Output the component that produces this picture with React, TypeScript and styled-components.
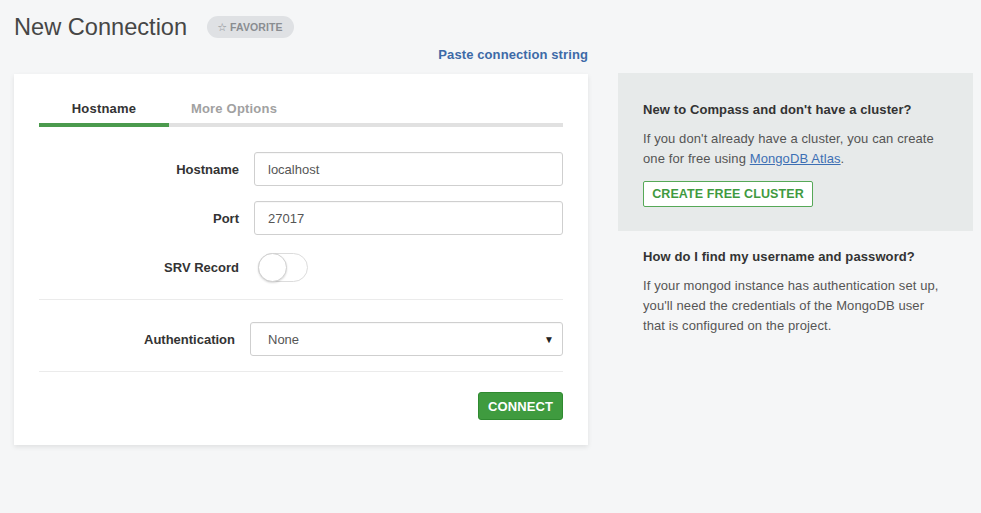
import React from "react";
import styled, { createGlobalStyle } from "styled-components";

const Global = createGlobalStyle`
  html, body { margin: 0; padding: 0; }
  body {
    background: #f5f6f7;
    font-family: "Liberation Sans", Arial, sans-serif;
    color: #333;
    width: 981px;
    height: 513px;
    overflow: hidden;
  }
  * { box-sizing: border-box; }
`;

const Page = styled.div`
  padding: 12px 8px 0 14px;
`;

const Header = styled.div`
  display: flex;
  align-items: center;
  height: 30px;
  gap: 20px;
`;

const Title = styled.h1`
  margin: 0;
  font-size: 23.6px;
  font-weight: 400;
  color: #464646;
  line-height: 30px;
`;

const FavPill = styled.span`
  display: inline-flex;
  align-items: center;
  gap: 3px;
  height: 22px;
  padding: 0 11px 0 10px;
  border-radius: 11px;
  background: #dfe1e4;
  color: #8a8d91;
  font-size: 10.5px;
  font-weight: 700;
  letter-spacing: 0.1px;
`;

const Star = styled.span`
  font-family: "DejaVu Sans", sans-serif;
  font-size: 11px;
  font-weight: 400;
`;

const Main = styled.div`
  display: grid;
  grid-template-columns: 574px 1fr;
  column-gap: 30px;
`;

const LinkRow = styled.div`
  grid-column: 1;
  text-align: right;
  line-height: 20px;
  margin-top: 2px;
  margin-bottom: 9px;
`;

const PasteLink = styled.a`
  font-size: 13px;
  font-weight: 700;
  color: #3d6aa7;
  text-decoration: none;
  letter-spacing: 0.1px;
`;

const Card = styled.div`
  grid-column: 1;
  background: #fff;
  box-shadow: 0 2px 5px rgba(0, 0, 0, 0.09);
  padding: 25px 25px 25px;
`;

const TabList = styled.div`
  display: flex;
  border-bottom: 4px solid #e1e1e1;
`;

const Tab = styled.div<{ $active?: boolean }>`
  width: 130px;
  text-align: center;
  font-size: 13px;
  font-weight: 700;
  line-height: 20px;
  letter-spacing: 0.2px;
  padding-bottom: 4px;
  margin-bottom: -4px;
  border-bottom: 4px solid ${(p) => (p.$active ? "#4b9a4d" : "transparent")};
  color: ${(p) => (p.$active ? "#333" : "#a1a1a1")};
`;

const FormGroup = styled.div<{ $label: number; $top: number }>`
  display: grid;
  grid-template-columns: ${(p) => p.$label}px 1fr;
  column-gap: 15px;
  row-gap: 15px;
  align-items: center;
  margin-top: ${(p) => p.$top}px;
`;

const Label = styled.label`
  text-align: right;
  font-size: 13px;
  font-weight: 700;
  color: #333;
`;

const Input = styled.div`
  height: 34px;
  border: 1px solid #cfcfcf;
  border-radius: 3px;
  padding: 0 13px;
  display: flex;
  align-items: center;
  font-size: 13px;
  color: #555;
  box-shadow: inset 0 1px 1px rgba(0, 0, 0, 0.03);
`;

const Select = styled(Input)`
  justify-content: space-between;
  padding: 0 8px 0 17px;
`;

const Arrow = styled.span`
  font-size: 10px;
  color: #222;
`;

const ToggleCell = styled.div`
  height: 34px;
  display: flex;
  align-items: center;
  padding-left: 4px;
`;

const Toggle = styled.div`
  position: relative;
  width: 50px;
  height: 29px;
  border-radius: 15px;
  border: 1px solid #dcdcdc;
  background: #fff;
`;

const Knob = styled.div`
  position: absolute;
  left: -1px;
  top: -1px;
  width: 29px;
  height: 29px;
  border-radius: 50%;
  background: #fff;
  border: 1px solid #d0d0d0;
  box-shadow: 0 1px 2px rgba(0, 0, 0, 0.15);
`;

const Divider = styled.hr<{ $top: number }>`
  border: 0;
  border-top: 1px solid #ebebeb;
  margin: ${(p) => p.$top}px 0 0;
`;

const Actions = styled.div`
  display: flex;
  justify-content: flex-end;
  margin-top: 20px;
`;

const ConnectButton = styled.button`
  width: 85px;
  height: 28px;
  border: 1px solid #2f8a30;
  border-radius: 3px;
  background: #3f9b3f;
  color: #fff;
  font-family: inherit;
  font-size: 13px;
  font-weight: 700;
  letter-spacing: 0.1px;
  padding: 0;
`;

const Side = styled.div`
  grid-column: 2;
  grid-row: 1 / span 2;
  align-self: start;
  margin-top: 31px;
`;

const InfoBox = styled.div<{ $shaded?: boolean }>`
  background: ${(p) => (p.$shaded ? "#e7eaea" : "transparent")};
  padding: ${(p) => (p.$shaded ? "27px 30px 24px 25px" : "16px 30px 0 25px")};
`;

const InfoTitle = styled.h3`
  margin: 0;
  font-size: 13px;
  font-weight: 700;
  line-height: 20px;
  color: #333;
  letter-spacing: 0.1px;
`;

const InfoText = styled.p`
  margin: 9px 0 0;
  font-size: 13px;
  line-height: 20px;
  color: #555;
  letter-spacing: 0.1px;
`;

const AtlasLink = styled.a`
  color: #3d6fb4;
  text-decoration: underline;
`;

const OutlineButton = styled.button`
  margin-top: 12px;
  height: 26px;
  width: 170px;
  border: 1px solid #56a857;
  border-radius: 2px;
  background: #fff;
  color: #3f9a40;
  font-family: inherit;
  font-size: 12.5px;
  font-weight: 700;
  padding: 0;
  letter-spacing: 0.1px;
`;

export default function App() {
  return (
    <>
      <Global />
      <Page>
        <Header>
          <Title>New Connection</Title>
          <FavPill>
            <Star>☆</Star>FAVORITE
          </FavPill>
        </Header>
        <Main>
          <LinkRow>
            <PasteLink href="#">Paste connection string</PasteLink>
          </LinkRow>
          <Card>
            <TabList>
              <Tab $active>Hostname</Tab>
              <Tab>More Options</Tab>
            </TabList>
            <FormGroup $label={200} $top={25}>
              <Label>Hostname</Label>
              <Input>localhost</Input>
              <Label>Port</Label>
              <Input>27017</Input>
              <Label>SRV Record</Label>
              <ToggleCell>
                <Toggle>
                  <Knob />
                </Toggle>
              </ToggleCell>
            </FormGroup>
            <Divider $top={15} />
            <FormGroup $label={196} $top={22}>
              <Label>Authentication</Label>
              <Select>
                <span>None</span>
                <Arrow>▼</Arrow>
              </Select>
            </FormGroup>
            <Divider $top={15} />
            <Actions>
              <ConnectButton>CONNECT</ConnectButton>
            </Actions>
          </Card>
          <Side>
            <InfoBox $shaded>
              <InfoTitle>New to Compass and don't have a cluster?</InfoTitle>
              <InfoText>
                If you don't already have a cluster, you can create one for free using{" "}
                <AtlasLink href="#">MongoDB Atlas</AtlasLink>.
              </InfoText>
              <OutlineButton>CREATE FREE CLUSTER</OutlineButton>
            </InfoBox>
            <InfoBox>
              <InfoTitle>How do I find my username and password?</InfoTitle>
              <InfoText>
                If your mongod instance has authentication set up, you'll need the credentials of
                the MongoDB user that is configured on the project.
              </InfoText>
            </InfoBox>
          </Side>
        </Main>
      </Page>
    </>
  );
}
